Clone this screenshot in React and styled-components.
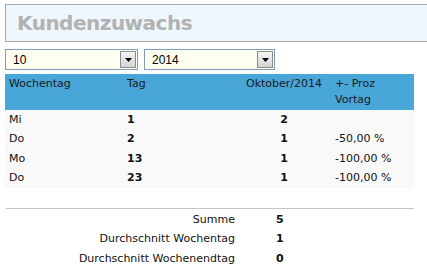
import { Fragment } from 'react';
import styled, { createGlobalStyle } from 'styled-components';

const GlobalStyle = createGlobalStyle`
	html, body {
		margin: 0;
		padding: 0;
		background: #ffffff;
	}
	body {
		font-family: 'DejaVu Sans', Verdana, sans-serif;
		font-size: 11px;
		color: #111111;
	}
`;

const rows = [
	{ day: 'Mi', date: '1', count: '2', diff: '' },
	{ day: 'Do', date: '2', count: '1', diff: '-50,00 %' },
	{ day: 'Mo', date: '13', count: '1', diff: '-100,00 %' },
	{ day: 'Do', date: '23', count: '1', diff: '-100,00 %' }
];

const totals = [
	{ label: 'Summe', value: '5' },
	{ label: 'Durchschnitt Wochentag', value: '1' },
	{ label: 'Durchschnitt Wochenendtag', value: '0' }
];

const Page = styled.div`
	padding: 4px 0 0 5px;
`;

const TitleBox = styled.div`
	height: 36px;
	display: flex;
	align-items: center;
	padding-left: 11px;
	background: #eef6fe;
	border: 1px solid #a9a9a9;
	border-right: none;
`;

const Title = styled.h1`
	margin: 0;
	font-family: 'DejaVu Sans', Verdana, sans-serif;
	font-weight: bold;
	font-size: 20px;
	color: #b2b2b2;
	letter-spacing: -0.5px;
`;

const Filters = styled.div`
	display: flex;
	gap: 6px;
	margin-top: 7px;
`;

const SelectBox = styled.div`
	box-sizing: border-box;
	width: ${(p) => p.width}px;
	height: 21px;
	display: flex;
	align-items: center;
	justify-content: space-between;
	padding: 1px;
	border: 1px solid #7f9db9;
	background: #fffff0;
	font-family: 'Liberation Sans', Arial, sans-serif;
	font-size: 12px;
	color: #000;
`;

const SelectValue = styled.span`
	padding-left: 6px;
`;

const DropButton = styled.span`
	box-sizing: border-box;
	width: 16px;
	height: 17px;
	display: flex;
	align-items: center;
	justify-content: center;
	border: 1px solid #8c8c8c;
	background: linear-gradient(#f4f4f4, #d4d4d4);
`;

const Table = styled.div`
	width: 409px;
	margin-top: 4px;
	background: #f9f9f9;
`;

const Grid = styled.div`
	display: grid;
	grid-template-columns: 118px 117px 88px 1fr;
	align-items: ${(p) => (p.head ? 'start' : 'center')};
	height: ${(p) => (p.head ? '36px' : '19.5px')};
	background: ${(p) => (p.head ? '#48a6d8' : 'transparent')};
	color: ${(p) => (p.head ? '#1a1a1a' : '#111')};
	line-height: 16px;
`;

const Cell = styled.div`
	padding: ${(p) => (p.head ? '2px' : '0')} 4px 0;
	font-weight: ${(p) => (p.bold ? 'bold' : 'normal')};
	text-align: ${(p) => p.align || 'left'};
	padding-left: ${(p) => (p.indent ? '7px' : '4px')};
`;

const Divider = styled.hr`
	width: 408px;
	margin: 20px 0 0 1px;
	border: none;
	border-top: 1px solid #c4c4c4;
`;

const Totals = styled.div`
	display: grid;
	grid-template-columns: 230px 88px;
	grid-auto-rows: 19.5px;
	align-items: center;
	margin-top: 1px;
	line-height: 16px;
`;

const TotalLabel = styled.div`
	text-align: right;
`;

const TotalValue = styled.div`
	padding-left: 41px;
	font-weight: bold;
`;

function Select({ value, width }) {
	return (
		<SelectBox width={width}>
			<SelectValue>{value}</SelectValue>
			<DropButton>
				<svg width="7" height="4" viewBox="0 0 7 4">
					<path d="M0 0H7L3.5 4Z" fill="#000" />
				</svg>
			</DropButton>
		</SelectBox>
	);
}

export default function App() {
	return (
		<Page>
			<GlobalStyle />
			<TitleBox>
				<Title>Kundenzuwachs</Title>
			</TitleBox>
			<Filters>
				<Select value="10" width={133} />
				<Select value="2014" width={131} />
			</Filters>
			<Table>
				<Grid head>
					<Cell head>Wochentag</Cell>
					<Cell head>Tag</Cell>
					<Cell head align="center">Oktober/2014</Cell>
					<Cell head indent>
						+- Proz
						<br />
						Vortag
					</Cell>
				</Grid>
				{rows.map((row) => (
					<Grid key={row.date}>
						<Cell>{row.day}</Cell>
						<Cell bold>{row.date}</Cell>
						<Cell bold align="center">{row.count}</Cell>
						<Cell indent>{row.diff}</Cell>
					</Grid>
				))}
			</Table>
			<Divider />
			<Totals>
				{totals.map((t) => (
					<Fragment key={t.label}>
						<TotalLabel>{t.label}</TotalLabel>
						<TotalValue>{t.value}</TotalValue>
					</Fragment>
				))}
			</Totals>
		</Page>
	);
}
